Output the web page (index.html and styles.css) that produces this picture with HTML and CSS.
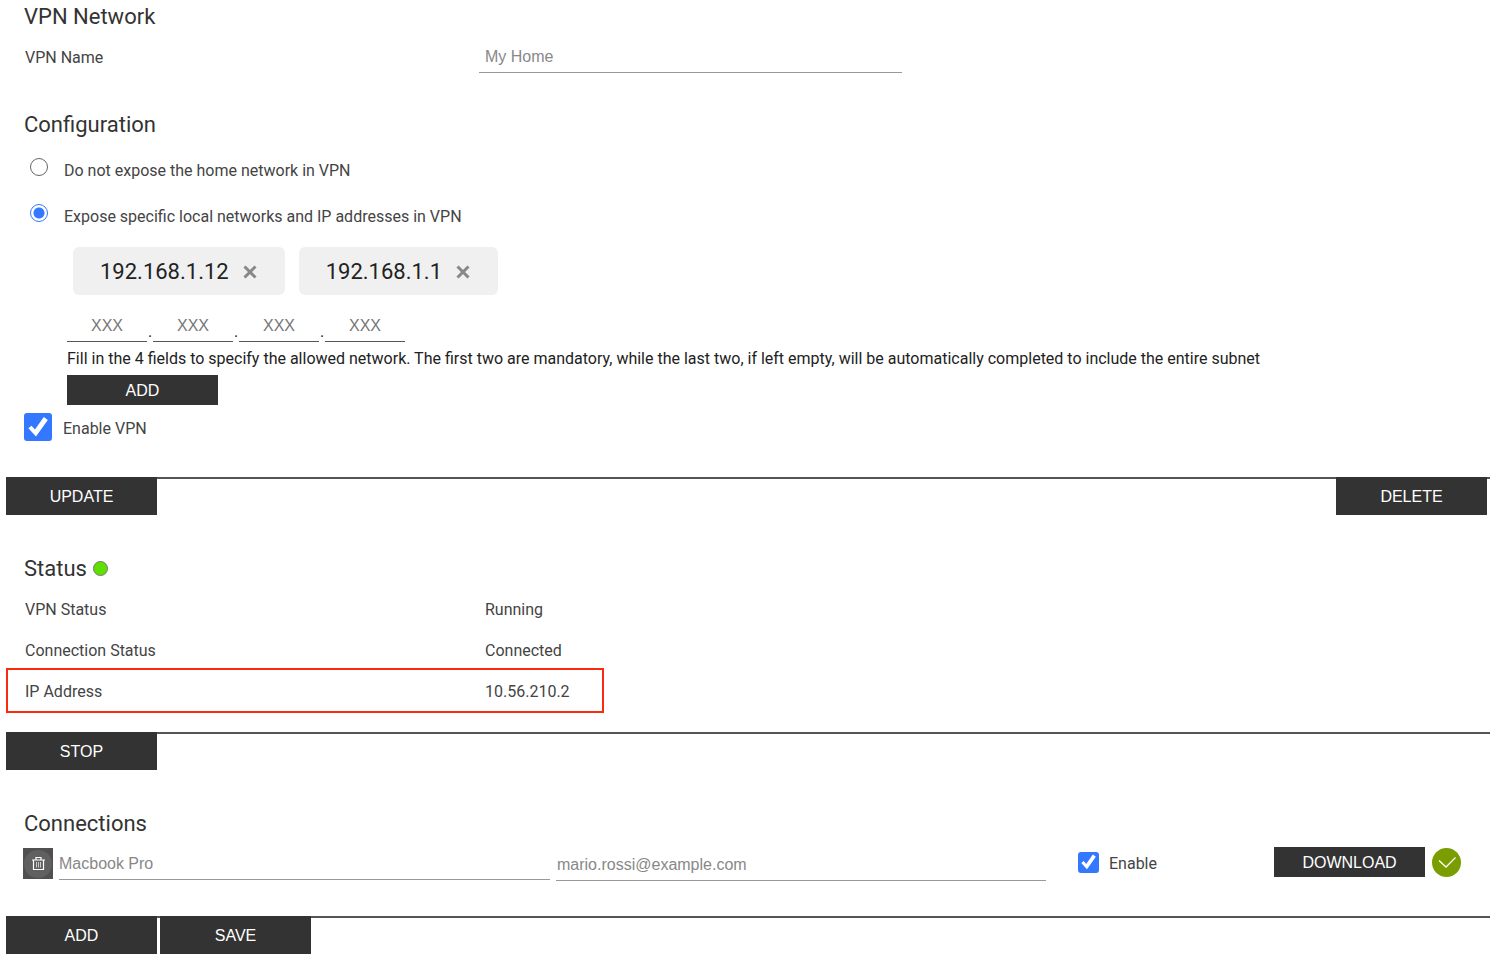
FILE: index.html
```
<!DOCTYPE html>
<html lang="en">
<head>
<meta charset="utf-8">
<title>VPN Network</title>
<link rel="stylesheet" href="styles.css">
</head>
<body>
<main>
  <section class="panel">
    <h2>VPN Network</h2>
    <div class="row row-input">
      <label for="vpn-name">VPN Name</label>
      <input class="field name-field" id="vpn-name" type="text" value="My Home">
    </div>
    <h2 class="config-title">Configuration</h2>
    <div class="choice">
      <input type="radio" name="expose" id="expose-none">
      <label for="expose-none">Do not expose the home network in VPN</label>
    </div>
    <div class="choice">
      <input type="radio" name="expose" id="expose-some" checked>
      <label for="expose-some">Expose specific local networks and IP addresses in VPN</label>
    </div>
    <div class="chips">
      <span class="chip">192.168.1.12 <button type="button" class="chip-x" aria-label="Remove 192.168.1.12"><svg width="14" height="14" viewBox="0 0 14 14"><path d="M1.500 1.500l11 11M12.500 1.500l-11 11"/></svg></button></span>
      <span class="chip">192.168.1.1 <button type="button" class="chip-x" aria-label="Remove 192.168.1.1"><svg width="14" height="14" viewBox="0 0 14 14"><path d="M1.500 1.500l11 11M12.500 1.500l-11 11"/></svg></button></span>
    </div>
    <div class="network">
      <div class="octets">
        <input class="octet" type="text" placeholder="XXX" aria-label="First octet"><span>.</span>
        <input class="octet" type="text" placeholder="XXX" aria-label="Second octet"><span>.</span>
        <input class="octet" type="text" placeholder="XXX" aria-label="Third octet"><span>.</span>
        <input class="octet" type="text" placeholder="XXX" aria-label="Fourth octet">
      </div>
      <p>Fill in the 4 fields to specify the allowed network. The first two are mandatory, while the last two, if left empty, will be automatically completed to include the entire subnet</p>
      <button type="button" class="btn btn-small">ADD</button>
    </div>
    <div class="enable-vpn">
      <input type="checkbox" id="enable-vpn" class="check check-large" checked>
      <label for="enable-vpn">Enable VPN</label>
    </div>
  </section>
  <div class="actions actions-split">
    <button type="button" class="btn">UPDATE</button>
    <button type="button" class="btn">DELETE</button>
  </div>

  <section class="panel panel-status">
    <h2>Status <span class="dot"></span></h2>
    <div class="row"><span>VPN Status</span><span class="value">Running</span></div>
    <div class="row"><span>Connection Status</span><span class="value">Connected</span></div>
    <div class="row marked"><span>IP Address</span><span class="value">10.56.210.2</span></div>
  </section>
  <div class="actions">
    <button type="button" class="btn">STOP</button>
  </div>

  <section class="panel">
    <h2>Connections</h2>
    <div class="connection">
      <button type="button" class="trash" aria-label="Delete connection">
        <svg width="30" height="30" viewBox="0 0 30 30"><circle cx="15" cy="15" r="14" fill="#606060"/><path d="M9 11h13M10.500 11.500v9h10v-9M13 10.500v-2h5v2" fill="none" stroke="#fff" stroke-width="1.200"/><path d="M13.500 13v5.500M15.500 13v5.500M17.500 13v5.500" fill="none" stroke="#ccc" stroke-width="1"/></svg>
      </button>
      <input class="field" type="text" value="Macbook Pro" aria-label="Device name">
      <input class="field mail-field" type="text" value="mario.rossi@example.com" aria-label="Email">
      <div class="enable-device">
        <input type="checkbox" id="enable-device" class="check" checked>
        <label for="enable-device">Enable</label>
      </div>
      <div class="download">
        <button type="button" class="btn btn-small">DOWNLOAD</button>
        <svg width="29" height="29" viewBox="0 0 29 29"><circle cx="14.500" cy="14.500" r="14.500" fill="#7a9e00"/><path d="M7 12.500l7 6.500L23.500 9.500" fill="none" stroke="#fff" stroke-width="1.300"/></svg>
      </div>
    </div>
  </section>
  <div class="actions">
    <button type="button" class="btn">ADD</button>
    <button type="button" class="btn">SAVE</button>
  </div>
</main>
</body>
</html>
```
FILE: styles.css
```
* { box-sizing: border-box; }
body { margin: 0; background: #fff; color: #444; font: 16px/24px Roboto, sans-serif; }
input, button { margin: 0; padding: 0; font: 16px/24px "Liberation Sans", Arial, sans-serif; }
h2 { margin: 0; font-size: 22px; line-height: 30px; font-weight: 400; color: #333; padding: 2px 0 0 24px; }
p { margin: 0; }

.row { display: grid; grid-template-columns: 454fr 423fr 588fr; align-items: center; height: 41px; padding-left: 25px; }
.row-input { margin-top: 4px; }
.row label, .row span, .choice label { padding-top: 2px; }
.value { padding-left: 6px; }
.field { width: 100%; height: 33px; border: 0; border-bottom: 1px solid #999; color: #888; background: none; padding-top: 2px; }
.name-field { padding-left: 6px; }
.config-title { margin-top: 31px; }

.choice { display: flex; height: 46px; align-items: center; padding-left: 30px; gap: 16px; }
.config-title + .choice { margin-top: 7px; }
.choice input { appearance: none; width: 18px; height: 18px; margin-bottom: 6px; border: 1px solid #666; border-radius: 50%; background: #fff; }
.choice input:checked { border: 1px solid #3478ff; background: radial-gradient(circle, #3478ff 5px, #fff 6px); }

.chips { display: flex; gap: 14px; padding-left: 73px; margin-top: 8px; }
.chip { display: flex; align-items: center; gap: 14px; height: 48px; padding: 1px 28px 0 27px; border-radius: 6px; background: #f0f0f0; color: #222; font-size: 22px; }
.chip-x { display: flex; border: 0; background: none; }
.chip-x path { stroke: #888; stroke-width: 3; }

.network { padding-left: 67px; color: #222; }
.octets { display: flex; align-items: flex-end; margin-top: 14px; }
.octets span { width: 6px; text-align: center; line-height: 20px; }
.octet { width: 80px; height: 33px; border: 0; border-bottom: 1px solid #555; padding-top: 2px; text-align: center; color: #555; }
.octet::placeholder { color: #777; }
.network p { margin: 5px 0 4px; }

.btn { width: 151px; height: 38px; padding-top: 1px; border: 0; background: #333; color: #fff; }
.btn-small { display: block; height: 30px; padding-top: 2px; }
.enable-vpn { display: flex; align-items: center; gap: 11px; margin-top: 8px; padding-left: 24px; }
.enable-vpn label, .enable-device label { padding-top: 4px; }
.check { appearance: none; width: 21px; height: 21px; border-radius: 3px; background: #3478ff; display: grid; place-items: center; }
.check::before { content: ""; width: 90%; height: 90%; background: #fff; clip-path: polygon(12% 55%, 24% 45%, 38% 60%, 73% 10%, 89% 22%, 42% 88%); }
.check-large { width: 28px; height: 28px; }

.actions { display: flex; gap: 3px; margin: 36px 0 37px 6px; padding-right: 3px; background: linear-gradient(#555, #555) top / 100% 2px no-repeat; }
.actions-split { justify-content: space-between; }
.actions:last-child { margin: 35px 0 0 6px; }
.dot { display: inline-block; width: 15px; height: 15px; margin-left: 1px; border: 1px solid #777; border-radius: 50%; background: #60e000; vertical-align: 0; }
.panel-status h2 { margin-bottom: 4px; }
.marked { width: 594px; margin-left: 8px; padding-left: 17px; grid-template-columns: 454px 1fr; outline: 2px solid #f82a10; }
.panel-status + .actions { margin-top: 21px; }

.connection { display: grid; grid-template-columns: 30px 491fr 490fr 216fr 216fr; align-items: start; margin-top: 8px; padding-left: 23px; column-gap: 6px; }
.trash { width: 30px; height: 31px; margin-top: 1px; border: 0; background: #505050; display: grid; place-items: center; }
.mail-field { height: 34px; padding: 3px 0 0 1px; }
.enable-device { display: flex; align-items: center; gap: 10px; padding: 1px 0 0 26px; }
.download { display: flex; align-items: center; gap: 7px; }
```
